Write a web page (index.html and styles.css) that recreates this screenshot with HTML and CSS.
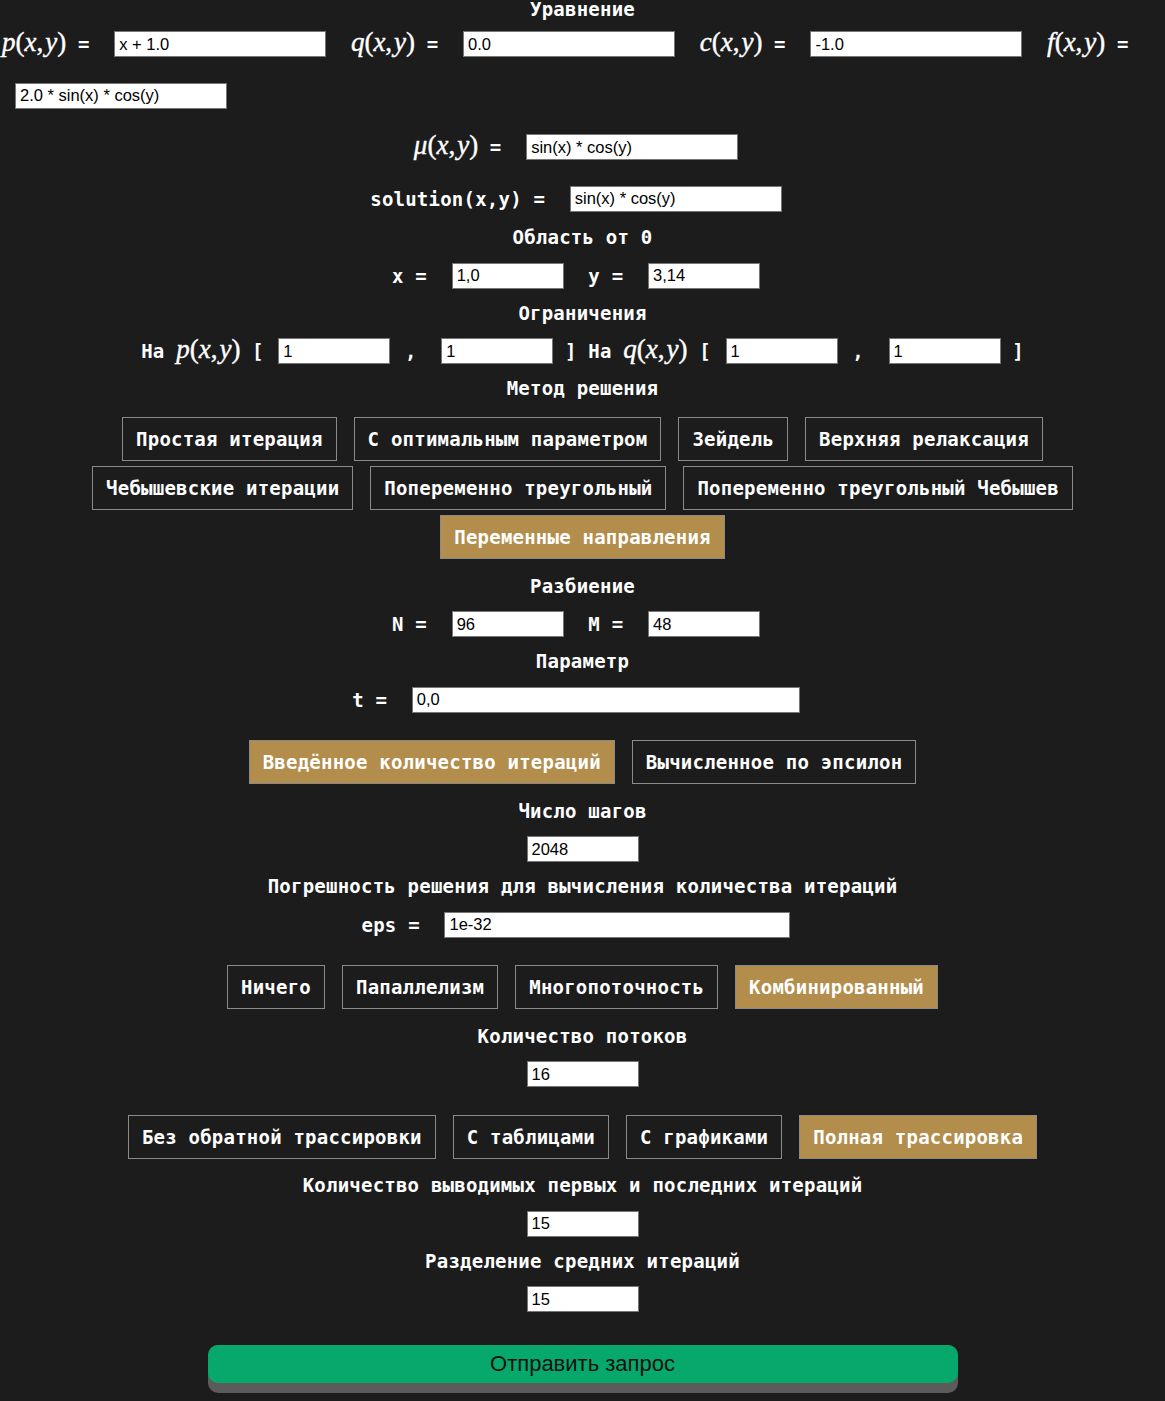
FILE: index.html
```html
<!DOCTYPE html>
<html lang="ru">
<head>
<meta charset="utf-8">
<title>Уравнение</title>
<link rel="stylesheet" href="styles.css">
</head>
<body>
<form class="page">
<div class="heading heading-top">Уравнение</div>
<div class="eq-wrap"><span class="m"><i>p</i>(<i>x</i>,<span class="ts"></span><i>y</i>)</span> = <input class="in in-eq" value="x + 1.0"> <span class="m"><i>q</i>(<i>x</i>,<span class="ts"></span><i>y</i>)</span> = <input class="in in-eq" value="0.0"> <span class="m"><i>c</i>(<i>x</i>,<span class="ts"></span><i>y</i>)</span> = <input class="in in-eq" value="-1.0"> <span class="m"><i>f</i>(<i>x</i>,<span class="ts"></span><i>y</i>)</span> = <input class="in in-eq" value="2.0 * sin(x) * cos(y)"></div>
<div class="eq-row"><span class="m"><i>μ</i>(<i>x</i>,<span class="ts"></span><i>y</i>)</span> = <input class="in in-eq" value="sin(x) * cos(y)"></div>
<div class="eq-row">solution(x,y) = <input class="in in-eq" value="sin(x) * cos(y)"></div>
<div class="heading">Область от 0</div>
<div class="row">x = <input class="in in-sm" value="1,0"> y = <input class="in in-sm" value="3,14"></div>
<div class="heading">Ограничения</div>
<div class="row">На <span class="m"><i>p</i>(<i>x</i>,<span class="ts"></span><i>y</i>)</span> [ <input class="in in-sm b1" value="1"> , <input class="in in-sm b2" value="1"> ] На <span class="m"><i>q</i>(<i>x</i>,<span class="ts"></span><i>y</i>)</span> [ <input class="in in-sm b1" value="1"> , <input class="in in-sm b2" value="1"> ]</div>
<div class="heading">Метод решения</div>
<div class="btns">
<button type="button" class="btn">Простая итерация</button>
<button type="button" class="btn">С оптимальным параметром</button>
<button type="button" class="btn">Зейдель</button>
<button type="button" class="btn">Верхняя релаксация</button>
<button type="button" class="btn">Чебышевские итерации</button>
<button type="button" class="btn">Попеременно треугольный</button>
<button type="button" class="btn">Попеременно треугольный Чебышев</button>
<button type="button" class="btn active">Переменные направления</button>
</div>
<div class="heading">Разбиение</div>
<div class="row">N = <input class="in in-sm" value="96"> M = <input class="in in-sm" value="48"></div>
<div class="heading">Параметр</div>
<div class="row">t = <input class="in in-t" value="0,0"></div>
<div class="btns">
<button type="button" class="btn active">Введённое количество итераций</button>
<button type="button" class="btn">Вычисленное по эпсилон</button>
</div>
<div class="heading">Число шагов</div>
<div class="row"><input class="in in-sm" value="2048"></div>
<div class="heading">Погрешность решения для вычисления количества итераций</div>
<div class="row">eps = <input class="in in-eps" value="1e-32"></div>
<div class="btns">
<button type="button" class="btn">Ничего</button>
<button type="button" class="btn">Папаллелизм</button>
<button type="button" class="btn">Многопоточность</button>
<button type="button" class="btn active">Комбинированный</button>
</div>
<div class="heading">Количество потоков</div>
<div class="row"><input class="in in-sm" value="16"></div>
<div class="btns">
<button type="button" class="btn">Без обратной трассировки</button>
<button type="button" class="btn">С таблицами</button>
<button type="button" class="btn">С графиками</button>
<button type="button" class="btn active">Полная трассировка</button>
</div>
<div class="heading">Количество выводимых первых и последних итераций</div>
<div class="row"><input class="in in-sm" value="15"></div>
<div class="heading">Разделение средних итераций</div>
<div class="row"><input class="in in-sm" value="15"></div>
<div class="submit-wrap"><div class="submit-base"><button type="button" class="submit">Отправить запрос</button></div></div>
</form>
</body>
</html>
```
FILE: styles.css
```css
* { box-sizing: border-box; }
html, body { margin: 0; padding: 0; background: #1c1c1c; }
body {
  color: #fff;
  font-family: "DejaVu Sans Mono", monospace;
  font-weight: bold;
  font-size: 19px;
  letter-spacing: 0.22px;
}
.page { width: 1165px; margin: 0; }
.heading { height: 25.5px; line-height: 25.5px; text-align: center; white-space: nowrap; }
.heading-top { height: 19px; line-height: 19px; }
.eq-wrap { line-height: 51.5px; padding-left: 2px; text-align: left; }
.eq-row { height: 51.5px; line-height: 51.5px; text-align: center; white-space: nowrap; }
.row { height: 50px; line-height: 50px; text-align: center; white-space: nowrap; }
.m {
  font-family: "Liberation Serif", serif;
  font-weight: normal;
  font-size: 27px;
  letter-spacing: 0;
  line-height: 1;
  -webkit-text-stroke: 0.4px #fff;
}
.m i { font-style: italic; }
.ts { display: inline-block; width: 2px; }
.in {
  height: 26px;
  vertical-align: middle;
  margin: -3px 13px 0;
  padding: 0 4px;
  border: 1px solid #767676;
  border-radius: 0;
  background: #fff;
  color: #000;
  font-family: "Liberation Sans", Arial, sans-serif;
  font-size: 16.5px;
  font-weight: normal;
  letter-spacing: 0;
  outline: none;
}
.in-eq { width: 212px; }
.in-sm { width: 112px; }
.in-t { width: 388px; }
.in-eps { width: 346px; }
.b1 { margin: -3px 3px 0; }
.b2 { margin: -3px 0 0 13px; }
.btns {
  display: flex;
  flex-wrap: wrap;
  justify-content: center;
  gap: 5px 17px;
  margin: 15.5px 0 14.5px;
}
.btn {
  height: 44px;
  padding: 0 13px;
  border: 1px solid #8a8a8a;
  border-radius: 0;
  background: transparent;
  color: #fff;
  font: inherit;
  letter-spacing: inherit;
  line-height: 42px;
  cursor: pointer;
}
.btn.active { background: #b38d4b; }
.submit-wrap { display: flex; justify-content: center; margin-top: 21px; }
.submit-base {
  width: 750px;
  height: 48px;
  border-radius: 10px;
  background: #5b5b5b;
}
.submit {
  display: block;
  width: 750px;
  height: 38px;
  border: 0;
  border-radius: 10px;
  background: #07a86b;
  color: #111;
  font-family: "Liberation Sans", Arial, sans-serif;
  font-size: 22px;
  font-weight: normal;
  letter-spacing: 0;
  cursor: pointer;
}
```
